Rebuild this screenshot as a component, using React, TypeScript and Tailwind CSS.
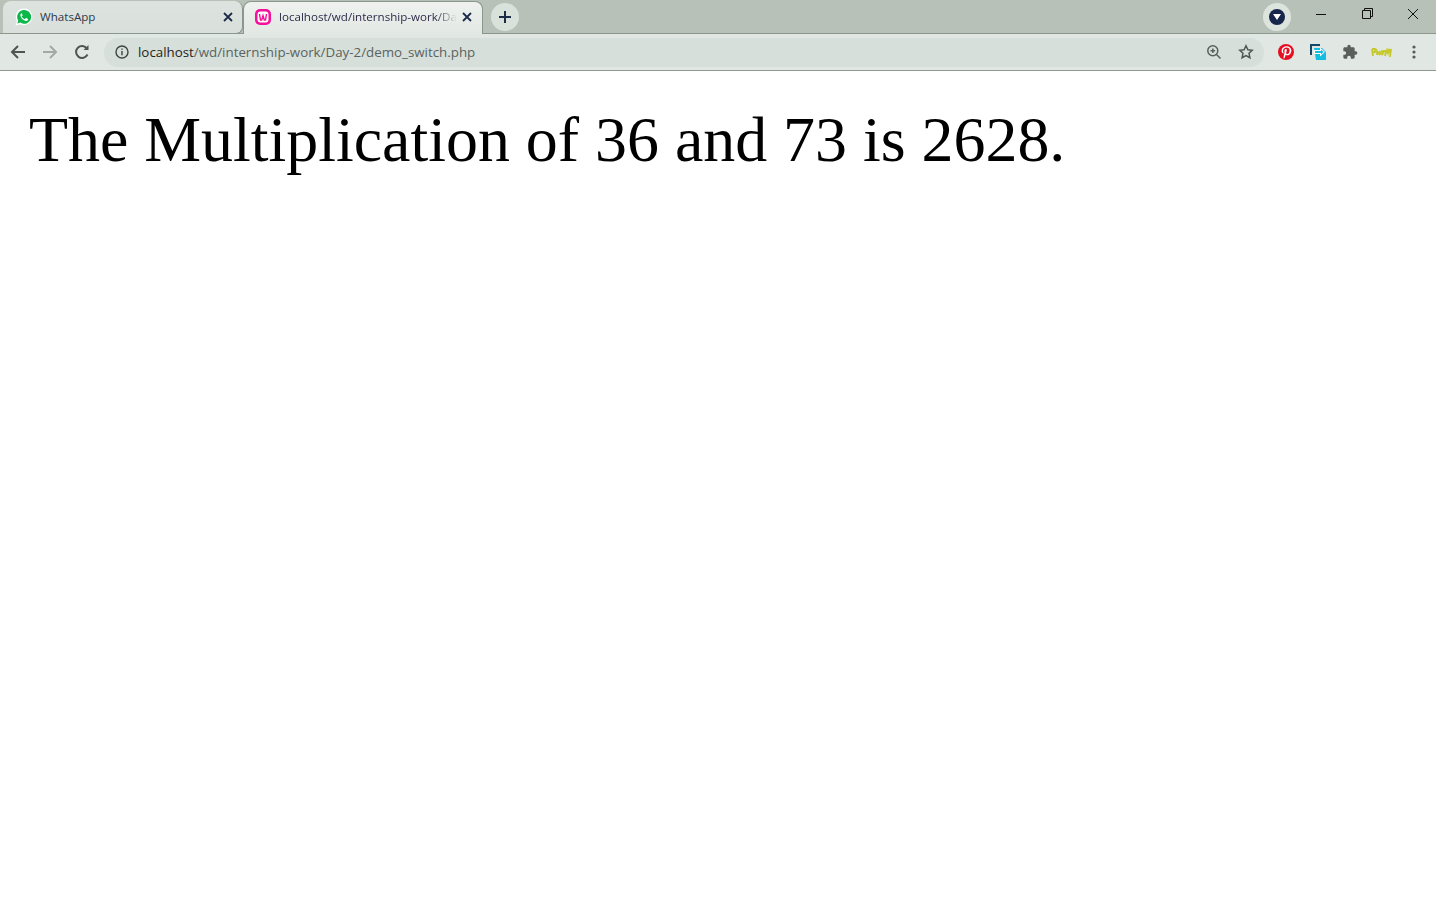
import React from "react";
import { FaPinterestP } from "react-icons/fa";

function X({ c = "#1c2b4a" }: { c?: string }) {
  return (
    <svg width="10" height="10" viewBox="0 0 10 10" fill="none" stroke={c} strokeWidth="1.8">
      <path d="M1 1l8 8M9 1L1 9" />
    </svg>
  );
}

export default function App() {
  return (
    <div className="min-h-[898px] bg-white flex flex-col font-['Open_Sans',sans-serif]">
      {/* tab strip */}
      <div className="h-[34px] bg-[#b7c1b8] flex items-end border-b border-[#8b968d] relative">
        <div className="ml-[3px] w-[240px] h-[33px] -mb-px shrink-0 bg-gradient-to-b from-[#dde4df] to-[#d9e0db] rounded-br-[7px] rounded-t-[8px] border-r border-b border-[#8b968d] flex items-center pl-[13px] pr-[9px]">
          <svg width="18" height="18" viewBox="0 0 18 18" className="shrink-0 -ml-px">
            <path d="M9 .5a8.3 8.3 0 0 0-7.2 12.4L.6 17.4l4.6-1.2A8.3 8.3 0 1 0 9 .5z" fill="#fff" />
            <path d="M9 2a6.9 6.9 0 0 0-5.8 10.5l-.8 2.9 3-.8A6.9 6.9 0 1 0 9 2z" fill="#0db84a" />
            <path d="M6.6 5.2c-.4 0-1.2.6-1.2 1.8 0 2.6 3 5.9 5.8 5.9 1.2 0 1.9-.9 1.9-1.5 0-.4-.1-.5-.3-.6l-1.5-.7c-.3-.1-.4 0-.6.2l-.6.7c-.2.2-.3.2-.6.1-1.2-.5-2-1.3-2.6-2.4-.1-.2-.1-.4.1-.5l.5-.7c.1-.2.1-.3 0-.5l-.6-1.4c-.1-.3-.3-.4-.5-.4z" fill="#fff" />
          </svg>
          <span className="ml-[7px] text-[11.6px] text-[#2f3a4a] flex-1">WhatsApp</span>
          <X />
        </div>
        <div className="w-[240px] h-[33px] -mb-px shrink-0 bg-gradient-to-b from-[#eff2ef] to-[#e2e8e3] rounded-t-[8px] border-x border-t border-[#8b968d] flex items-center pl-[11px] pr-[10px] pb-[2px]">
          <svg width="16" height="16" viewBox="0 0 16 16" className="shrink-0">
            <rect width="16" height="16" rx="5" fill="#f5109c" />
            <rect x="2.500" y="2.500" width="11" height="11" rx="3" fill="#fff" />
            <path d="M4.500 5l1 6h1.200L8 6.500 9.300 11h1.200l1-6" fill="none" stroke="#f5109c" strokeWidth="1.400" />
          </svg>
          <span className="ml-[8px] text-[11.6px] text-[#2f2a4a] whitespace-nowrap [mask-image:linear-gradient(to_right,black_88%,transparent)]">localhost/wd/internship-work/Da</span>
          <span className="ml-auto flex"><X /></span>
        </div>
        <div className="ml-[8px] mb-[2px] w-[28px] h-[28px] rounded-full bg-[#d9e1db] flex items-center justify-center shrink-0">
          <svg width="14" height="14" viewBox="0 0 14 14" fill="none" stroke="#1c2b4a" strokeWidth="2"><path d="M7 1v12M1 7h12" /></svg>
        </div>
        <div className="flex-1" />
        <div className="mb-[2px] w-[28px] h-[28px] rounded-full bg-[#dde4de] flex items-center justify-center shrink-0">
          <span className="w-[16px] h-[16px] rounded-full bg-[#16264d] flex items-center justify-center">
            <svg width="8" height="6" viewBox="0 0 8 6" fill="white"><path d="M0 0h8L4 6z" /></svg>
          </span>
        </div>
        <div className="ml-[7px] w-[138px] h-[33px] flex self-start shrink-0">
          <div className="w-[46px] flex justify-center pt-[14px]"><div className="w-[10px] h-px bg-[#111]" /></div>
          <div className="w-[46px] flex justify-center pt-[8px]">
            <svg width="11" height="11" viewBox="0 0 11 11" fill="none" stroke="#111" strokeWidth="1"><path d="M.5 2.500h8v8h-8zM2.500 2.500v-2h8v8h-2" /></svg>
          </div>
          <div className="w-[46px] flex justify-center pt-[8px]">
            <svg width="12" height="12" viewBox="0 0 12 12" fill="none" stroke="#111" strokeWidth="1"><path d="M1 1l10 10M11 1L1 11" /></svg>
          </div>
        </div>
      </div>
      {/* toolbar */}
      <div className="h-[37px] bg-[#e1e7e2] border-b border-[#8f9991] flex items-center shrink-0">
        <div className="w-[104px] flex items-center pl-[10px] gap-[16px] shrink-0">
          <svg width="16" height="16" viewBox="0 0 16 16" fill="none" stroke="#4f5650" strokeWidth="2"><path d="M15 8H2M8 2L2 8l6 6" /></svg>
          <svg width="16" height="16" viewBox="0 0 16 16" fill="none" stroke="#a3aaa5" strokeWidth="2"><path d="M1 8h13M8 2l6 6-6 6" /></svg>
          <svg width="16" height="16" viewBox="0 0 16 16" fill="none" stroke="#4f5650" strokeWidth="2"><path d="M13.500 10.500A6 6 0 1 1 13 4.500" /><path d="M14.500 1v5h-5" fill="#4f5650" stroke="none" /></svg>
        </div>
        <div className="w-[1160px] h-[29px] bg-[#d6dfda] rounded-full flex items-center pl-[11px] pr-[10px] shrink-0">
          <svg width="14" height="14" viewBox="0 0 14 14" fill="none" stroke="#3f4640" strokeWidth="1.400"><circle cx="7" cy="7" r="6" /><path d="M7 6v4.200M7 3.400v1.400" /></svg>
          <span className="ml-[9px] mt-[2px] text-[13.33px] text-[#5a6360]"><span className="text-[#1d2420]">localhost</span>/wd/internship-work/Day-2/demo_switch.php</span>
          <span className="ml-auto flex items-center gap-[16px]">
            <svg width="16" height="16" viewBox="0 0 16 16" fill="none" stroke="#59605b" strokeWidth="1.500"><circle cx="6.800" cy="6.800" r="5" /><path d="M10.500 10.500l4 4M4.500 6.800h4.600M6.800 4.500v4.600" /></svg>
            <svg width="16" height="16" viewBox="0 0 16 16" fill="none" stroke="#4f5650" strokeWidth="1.500"><path d="M8 1.800l1.900 4 4.300.5-3.200 3 .9 4.400L8 11.500l-3.900 2.200.9-4.400-3.200-3 4.300-.5z" /></svg>
          </span>
        </div>
        <div className="flex items-center pl-[14px] gap-[16px]">
          <span className="w-[16px] h-[16px] rounded-full bg-[#e60e23] flex items-center justify-center text-white"><FaPinterestP size={13} /></span>
          <svg width="16" height="16" viewBox="0 0 16 16"><path d="M0 0h10v2H2v9H0z" fill="#14496c" /><path d="M4 4h8l4 4v8H6z" fill="#12bfe3" /><path d="M4 6h6V3.500L15 8l-5 4.500V10H4z" fill="#fff" /><path d="M5 7h6V5.500L13.500 8 11 10.500V9H5z" fill="#12bfe3" /></svg>
          <svg width="16" height="16" viewBox="0 0 24 24" fill="#5a5f5c"><path d="M20.500 11H19V7c0-1.100-.9-2-2-2h-4V3.500C13 2.120 11.880 1 10.500 1S8 2.120 8 3.500V5H4c-1.100 0-1.990.9-1.990 2v3.800H3.500c1.490 0 2.700 1.210 2.700 2.700s-1.210 2.700-2.700 2.700H2V20c0 1.100.9 2 2 2h3.800v-1.500c0-1.490 1.210-2.700 2.700-2.700 1.490 0 2.700 1.210 2.700 2.700V22H17c1.100 0 2-.9 2-2v-4h1.500c1.380 0 2.500-1.120 2.500-2.500S21.880 11 20.500 11z" /></svg>
          <span className="w-[16px] flex justify-center">
            <svg width="22" height="12" viewBox="0 0 22 12" fill="none" stroke="#c6c92c" strokeWidth="1.800" className="shrink-0"><path d="M1 3l1 7M1 3h3v3H2M6 9V5l2 3 1-3v4M11 4v5l2-4h2l-1 5 2-6 1 3 1-4 1 4 1-4-1 8" /></svg>
          </span>
          <span className="w-[16px] flex justify-center">
            <svg width="4" height="14" viewBox="0 0 4 14" fill="#565c58"><circle cx="2" cy="2" r="1.600" /><circle cx="2" cy="7" r="1.600" /><circle cx="2" cy="12" r="1.600" /></svg>
          </span>
        </div>
      </div>
      {/* page */}
      <div className="pl-[29px] pt-[28px]">
        <p className="font-['Liberation_Serif',serif] text-[63.9px] leading-[82px] text-black whitespace-nowrap">The Multiplication of 36 and 73 is 2628.</p>
      </div>
    </div>
  );
}
